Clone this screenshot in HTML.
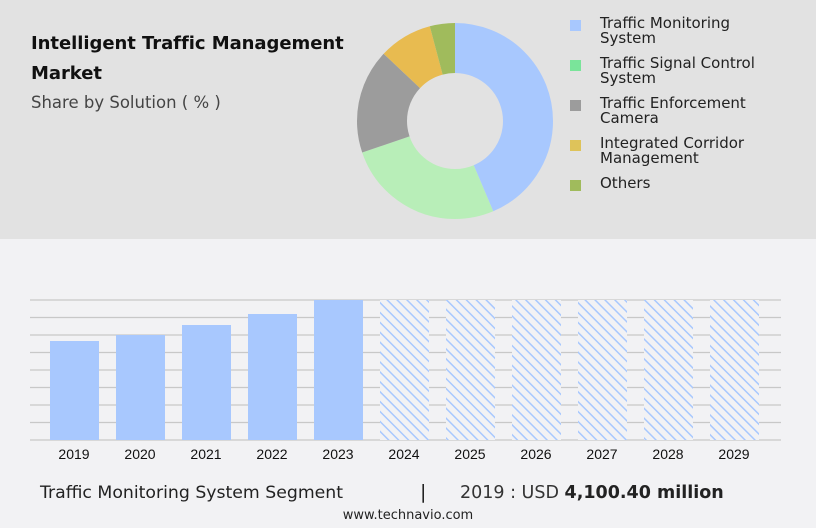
<!DOCTYPE html>
<html><head><style>
body{margin:0;width:816px;height:528px;background:#f2f2f4;font-family:"DejaVu Sans",sans-serif;position:relative;overflow:hidden}
.top{position:absolute;left:0;top:0;width:816px;height:239px;background:#e2e2e2}
.t{position:absolute;left:31px;top:29px;font-weight:bold;font-size:18px;line-height:30px;color:#111;letter-spacing:-0.05px}
.s{position:absolute;left:31px;top:93px;font-size:16.5px;color:#444}
.lg{position:absolute;left:570px;font-size:15px;line-height:15px;color:#222}
.lg i{position:absolute;left:0;top:4px;width:11px;height:11px}
.lg span{position:absolute;left:30px;top:0;white-space:nowrap}
.yr{position:absolute;top:446px;font-size:14px;color:#111;width:60px;text-align:center;font-family:"Liberation Sans",sans-serif}
</style></head><body>
<div class="top"></div>
<div class="t">Intelligent Traffic Management<br>Market</div>
<div class="s">Share by Solution ( % )</div>
<svg style="position:absolute;left:0;top:0" width="816" height="240">
<g transform="translate(455,121) rotate(-90)" fill="none" stroke-width="50">
<circle r="73" stroke="#a8c8fe" stroke-dasharray="200 459" stroke-dashoffset="0"/>
<circle r="73" stroke="#b8eeb8" stroke-dasharray="120 459" stroke-dashoffset="-200"/>
<circle r="73" stroke="#9c9c9c" stroke-dasharray="79 459" stroke-dashoffset="-320"/>
<circle r="73" stroke="#e8bb50" stroke-dasharray="40.5 459" stroke-dashoffset="-399"/>
<circle r="73" stroke="#a0bb5c" stroke-dasharray="20 459" stroke-dashoffset="-439.5"/>
</g></svg>
<div class="lg" style="top:16px"><i style="background:#a8c8fe"></i><span>Traffic Monitoring<br>System</span></div>
<div class="lg" style="top:56px"><i style="background:#7ae49a"></i><span>Traffic Signal Control<br>System</span></div>
<div class="lg" style="top:96px"><i style="background:#9c9c9c"></i><span>Traffic Enforcement<br>Camera</span></div>
<div class="lg" style="top:136px"><i style="background:#dec35a"></i><span>Integrated Corridor<br>Management</span></div>
<div class="lg" style="top:176px"><i style="background:#a0bb5c"></i><span>Others</span></div>
<svg style="position:absolute;left:0;top:290px" width="816" height="160">
<defs><pattern id="h" width="7" height="7" patternUnits="userSpaceOnUse" patternTransform="rotate(-45)"><rect width="7" height="7" fill="#f2f2f4"/><line x1="0" y1="0" x2="0" y2="7" stroke="#a8c8fe" stroke-width="3"/></pattern></defs>
<g stroke="#c8c8c8" stroke-width="1.2">
<line x1="30" x2="781" y1="10" y2="10"/><line x1="30" x2="781" y1="27.5" y2="27.5"/><line x1="30" x2="781" y1="45" y2="45"/><line x1="30" x2="781" y1="62.5" y2="62.5"/><line x1="30" x2="781" y1="80" y2="80"/><line x1="30" x2="781" y1="97.5" y2="97.5"/><line x1="30" x2="781" y1="115" y2="115"/><line x1="30" x2="781" y1="132.5" y2="132.5"/><line x1="30" x2="781" y1="150" y2="150"/></g>
<g fill="#a8c8fe"><rect x="50" y="51" width="49" height="99"/><rect x="116" y="45" width="49" height="105"/><rect x="182" y="35" width="49" height="115"/><rect x="248" y="24" width="49" height="126"/><rect x="314" y="10" width="49" height="140"/></g>
<g fill="url(#h)"><rect x="380" y="10" width="49" height="140"/><rect x="446" y="10" width="49" height="140"/><rect x="512" y="10" width="49" height="140"/><rect x="578" y="10" width="49" height="140"/><rect x="644" y="10" width="49" height="140"/><rect x="710" y="10" width="49" height="140"/></g>
</svg>
<div class="yr" style="left:44px">2019</div><div class="yr" style="left:110px">2020</div><div class="yr" style="left:176px">2021</div><div class="yr" style="left:242px">2022</div><div class="yr" style="left:308px">2023</div><div class="yr" style="left:374px">2024</div><div class="yr" style="left:440px">2025</div><div class="yr" style="left:506px">2026</div><div class="yr" style="left:572px">2027</div><div class="yr" style="left:638px">2028</div><div class="yr" style="left:704px">2029</div>
<div style="position:absolute;left:40px;top:483px;font-size:17.3px;color:#222">Traffic Monitoring System Segment</div>
<div style="position:absolute;left:420px;top:481px;font-size:19px;color:#222">|</div>
<div style="position:absolute;left:460px;top:483px;font-size:17.5px;color:#333">2019 : USD <b style="color:#222">4,100.40 million</b></div>
<div style="position:absolute;left:0;width:816px;top:508px;text-align:center;font-size:13px;color:#222">www.technavio.com</div>
</body></html>
